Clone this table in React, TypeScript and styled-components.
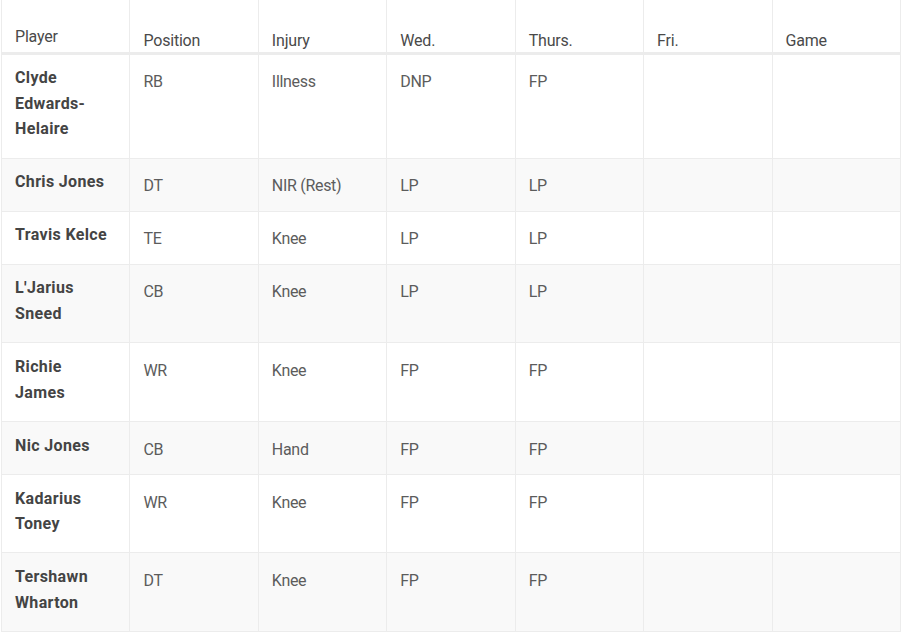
import React from "react";
import styled, { createGlobalStyle } from "styled-components";

const Global = createGlobalStyle`
  html, body { margin: 0; padding: 0; background: #fff; }
  body { font-family: Roboto, "Liberation Sans", sans-serif; }
`;

const Wrap = styled.div`
  padding-left: 1px;
  width: 900px;
`;

const Table = styled.table`
  width: 900px;
  table-layout: fixed;
  border-collapse: collapse;
  border-left: 1px solid #ececec;
  border-right: 1px solid #ececec;
  font-size: 16px;
  line-height: 25.6px;
`;

const HeadRow = styled.tr`
  height: 53px;
  border-bottom: 3px solid #ececec;
`;

const HeadCell = styled.th<{ $first?: boolean }>`
  text-align: left;
  font-weight: 400;
  color: #4a4a4a;
  letter-spacing: -0.2px;
  vertical-align: bottom;
  padding: 0 13px ${(p) => (p.$first ? "5px" : "1px")} 13px;
  border-left: 1px solid #ececec;
  line-height: 20px;
`;

const Row = styled.tr<{ $alt: boolean }>`
  background: ${(p) => (p.$alt ? "#f9f9f9" : "#fff")};
  border-bottom: 1px solid #ececec;
`;

const NameCell = styled.td`
  font-weight: 700;
  color: #444;
  letter-spacing: 0.35px;
  vertical-align: top;
  padding: 10.8px 20px 15.6px 13px;
  border-left: 1px solid #ececec;
`;

const Cell = styled.td`
  color: #5c5c5c;
  letter-spacing: -0.3px;
  vertical-align: top;
  padding: 14.8px 13px 11.6px 13px;
  border-left: 1px solid #ececec;
`;

const headers = ["Position", "Injury", "Wed.", "Thurs.", "Fri.", "Game"];

const rows = [
  ["Clyde Edwards-Helaire", "RB", "Illness", "DNP", "FP"],
  ["Chris Jones", "DT", "NIR (Rest)", "LP", "LP"],
  ["Travis Kelce", "TE", "Knee", "LP", "LP"],
  ["L'Jarius Sneed", "CB", "Knee", "LP", "LP"],
  ["Richie James", "WR", "Knee", "FP", "FP"],
  ["Nic Jones", "CB", "Hand", "FP", "FP"],
  ["Kadarius Toney", "WR", "Knee", "FP", "FP"],
  ["Tershawn Wharton", "DT", "Knee", "FP", "FP"],
];

export default function App() {
  return (
    <Wrap>
      <Global />
      <Table>
        <thead>
          <HeadRow>
            <HeadCell $first>Player</HeadCell>
            {headers.map((h) => (
              <HeadCell key={h}>{h}</HeadCell>
            ))}
          </HeadRow>
        </thead>
        <tbody>
          {rows.map((r, i) => (
            <Row key={r[0]} $alt={i % 2 === 1}>
              <NameCell>{r[0]}</NameCell>
              <Cell>{r[1]}</Cell>
              <Cell>{r[2]}</Cell>
              <Cell>{r[3]}</Cell>
              <Cell>{r[4]}</Cell>
              <Cell></Cell>
              <Cell></Cell>
            </Row>
          ))}
        </tbody>
      </Table>
    </Wrap>
  );
}
